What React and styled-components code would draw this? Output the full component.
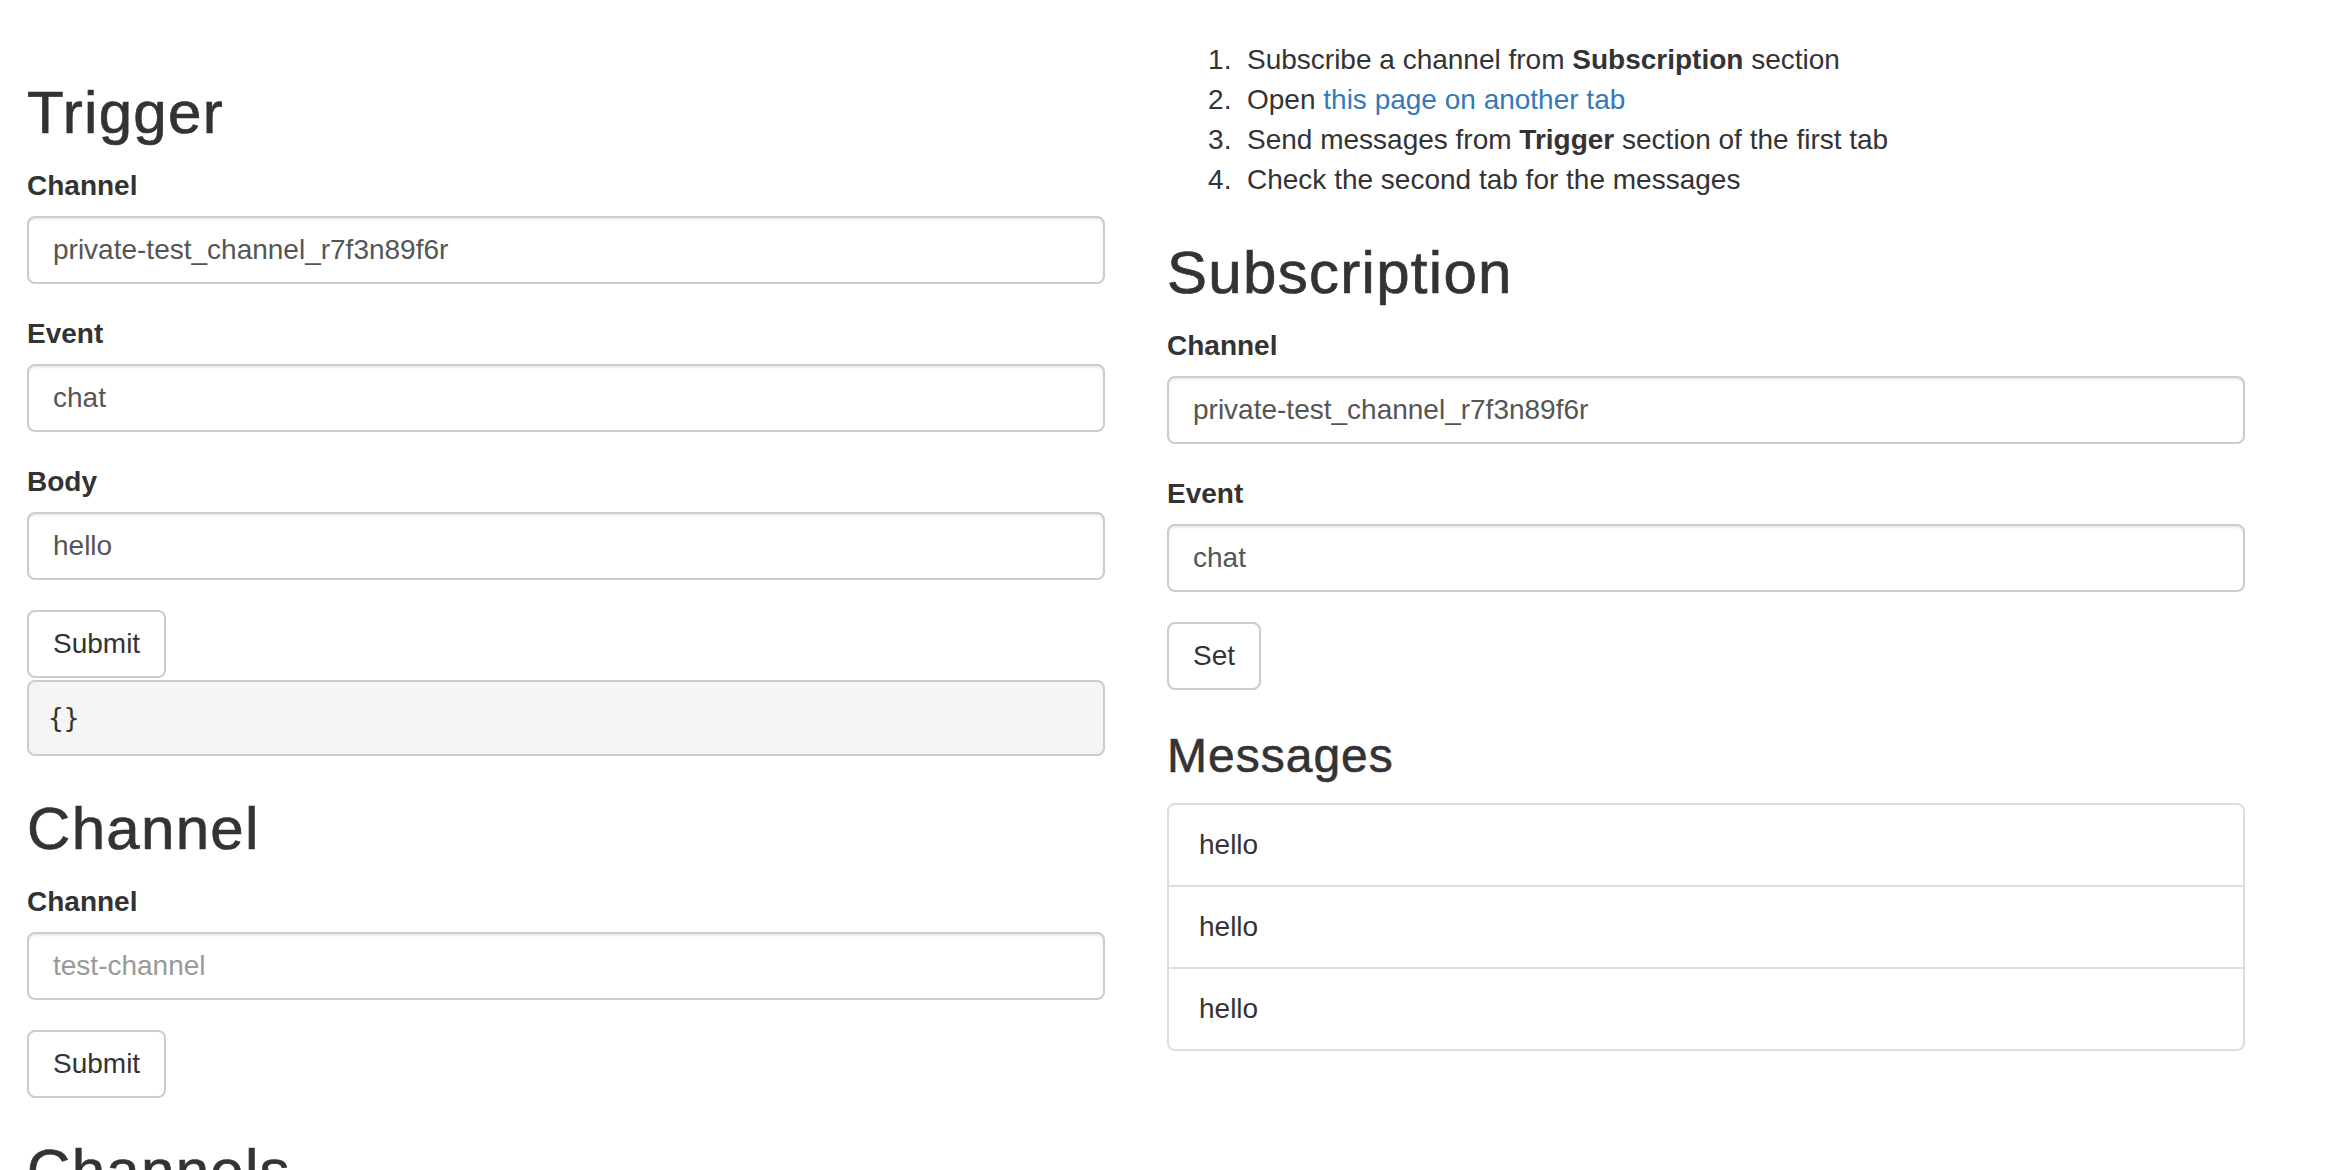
import React, { useState } from 'react'
import styled, { createGlobalStyle } from 'styled-components'

export default function App() {
  const [trigger, setTrigger] = useState({
    channel: 'private-test_channel_r7f3n89f6r',
    event: 'chat',
    body: 'hello',
  })
  const [channelName, setChannelName] = useState('')
  const [sub, setSub] = useState({
    channel: 'private-test_channel_r7f3n89f6r',
    event: 'chat',
  })
  const messages = ['hello', 'hello', 'hello']

  return (
    <>
      <GlobalStyle />
      <Page>
        <Column>
          <Heading>Trigger</Heading>
          <FormGroup>
            <Label>Channel</Label>
            <Input
              value={trigger.channel}
              onChange={(e) => setTrigger({ ...trigger, channel: e.target.value })}
            />
          </FormGroup>
          <FormGroup>
            <Label>Event</Label>
            <Input
              value={trigger.event}
              onChange={(e) => setTrigger({ ...trigger, event: e.target.value })}
            />
          </FormGroup>
          <FormGroup>
            <Label>Body</Label>
            <Input
              value={trigger.body}
              onChange={(e) => setTrigger({ ...trigger, body: e.target.value })}
            />
          </FormGroup>
          <Button>Submit</Button>
          <Pre>{'{}'}</Pre>

          <Heading>Channel</Heading>
          <FormGroup>
            <Label>Channel</Label>
            <Input
              placeholder="test-channel"
              value={channelName}
              onChange={(e) => setChannelName(e.target.value)}
            />
          </FormGroup>
          <Button>Submit</Button>

          <Heading>Channels</Heading>
        </Column>

        <Column>
          <Steps>
            <li>Subscribe a channel from <b>Subscription</b> section</li>
            <li>Open <Link href="#">this page on another tab</Link></li>
            <li>Send messages from <b>Trigger</b> section of the first tab</li>
            <li>Check the second tab for the messages</li>
          </Steps>

          <Heading>Subscription</Heading>
          <FormGroup>
            <Label>Channel</Label>
            <Input
              value={sub.channel}
              onChange={(e) => setSub({ ...sub, channel: e.target.value })}
            />
          </FormGroup>
          <FormGroup>
            <Label>Event</Label>
            <Input
              value={sub.event}
              onChange={(e) => setSub({ ...sub, event: e.target.value })}
            />
          </FormGroup>
          <Button>Set</Button>

          <SubHeading>Messages</SubHeading>
          <ListGroup>
            {messages.map((m, i) => (
              <ListItem key={i}>{m}</ListItem>
            ))}
          </ListGroup>
        </Column>
      </Page>
    </>
  )
}

const GlobalStyle = createGlobalStyle`
  * {
    box-sizing: border-box;
  }
  body {
    margin: 0;
    background: #fff;
    color: #333;
    font-family: "Liberation Sans", Arial, Helvetica, sans-serif;
    font-size: 28px;
    line-height: 1.42857;
  }
`

const Page = styled.div`
  display: grid;
  grid-template-columns: 1078px 1078px;
  column-gap: 62px;
  padding: 40px 0 0 27px;
  align-items: start;
`

const Column = styled.div`
  min-width: 0;
`

// helvetica neue medium is a touch wider and heavier than liberation
const Heading = styled.h2`
  margin: 40px 0 20px;
  font-size: 60px;
  font-weight: 500;
  line-height: 1.1;
  letter-spacing: 1.3px;
  -webkit-text-stroke: 0.7px #333;
  color: #333;
`

const SubHeading = styled.h3`
  margin: 40px 0 20px;
  font-size: 48px;
  font-weight: 500;
  line-height: 1.1;
  letter-spacing: 1px;
  -webkit-text-stroke: 0.6px #333;
  color: #333;
`

const FormGroup = styled.div`
  margin-bottom: 30px;
`

const Label = styled.label`
  display: block;
  margin-bottom: 10px;
  font-weight: bold;
  line-height: 40px;
`

const Input = styled.input`
  display: block;
  width: 100%;
  height: 68px;
  padding: 12px 24px;
  font-family: inherit;
  font-size: 28px;
  line-height: 40px;
  color: #555;
  background: #fff;
  border: 2px solid #ccc;
  border-radius: 8px;
  box-shadow: inset 0 2px 2px rgba(0, 0, 0, 0.075);
  outline: none;

  &::placeholder {
    color: #999;
  }
`

const Button = styled.button`
  display: block;
  height: 68px;
  padding: 12px 24px;
  font-family: inherit;
  font-size: 28px;
  line-height: 40px;
  color: #333;
  background: #fff;
  border: 2px solid #ccc;
  border-radius: 8px;
  cursor: pointer;

  &:hover {
    background: #e6e6e6;
    border-color: #adadad;
  }
`

const Pre = styled.pre`
  margin: 2px 0 20px;
  padding: 17px 19px;
  font-family: "DejaVu Sans Mono", Menlo, monospace;
  font-size: 26px;
  line-height: 38px;
  color: #333;
  background: #f5f5f5;
  border: 2px solid #ccc;
  border-radius: 8px;
`

const Steps = styled.ol`
  margin: 0 0 20px;
  padding-left: 80px;

  li::marker {
    content: counter(list-item) ".\\00a0\\00a0";
  }
`

const Link = styled.a`
  color: #337ab7;
  text-decoration: none;
`

const ListGroup = styled.div`
  margin-bottom: 40px;
`

const ListItem = styled.div`
  padding: 20px 30px;
  margin-bottom: -2px;
  background: #fff;
  border: 2px solid #ddd;

  &:first-child {
    border-top-left-radius: 8px;
    border-top-right-radius: 8px;
  }
  &:last-child {
    margin-bottom: 0;
    border-bottom-left-radius: 8px;
    border-bottom-right-radius: 8px;
  }
`
